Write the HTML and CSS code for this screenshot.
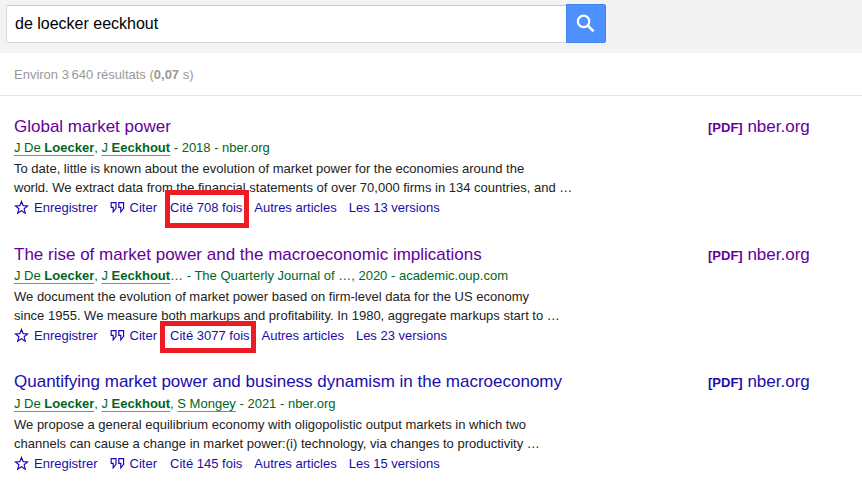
FILE: index.html
```html
<!DOCTYPE html>
<html lang="fr">
<head>
    <meta charset="UTF-8">
    <meta name="viewport" content="width=device-width, initial-scale=1.0">
    <title>de loecker eeckhout</title>
    <link rel="stylesheet" href="styles.css">
</head>
<body>
    <svg class="defs" width="0" height="0">
        <symbol id="star" viewBox="0 0 15 15">
            <path d="M7.5 1.4L9.1 5.6L13.6 5.9L10.1 8.8L11.3 13.2L7.5 10.8L3.7 13.2L4.9 8.8L1.4 5.9L5.9 5.6Z" fill="none" stroke="currentColor" stroke-width="1.2"/>
        </symbol>
        <symbol id="quote" viewBox="0 0 15 15">
            <path d="M1.2 2.6H6V8.4L3.2 11.9V7.4H1.2ZM8.8 2.6H13.6V8.4L10.8 11.9V7.4H8.8Z" fill="none" stroke="currentColor" stroke-width="1.2"/>
        </symbol>
    </svg>

    <header class="header">
        <form class="search">
            <input class="search-input" type="text" value="de loecker eeckhout">
            <button class="search-button" type="button" aria-label="Rechercher">
                <svg width="20" height="20" viewBox="0 0 20 20">
                    <circle cx="7.6" cy="7.4" r="5.7" fill="none" stroke="#fff" stroke-width="2.2"/>
                    <path d="M11.6 11.4L17.6 17.4" stroke="#fff" stroke-width="2.6"/>
                </svg>
            </button>
        </form>
    </header>

    <div class="stats">Environ 3<span class="thin"></span>640 résultats (<b>0,07</b> s)</div>

    <main class="results">
        <article class="result">
            <div class="main">
                <h3 class="title visited">Global market power</h3>
                <div class="authors"><a>J De <b>Loecker</b></a>, <a>J <b>Eeckhout</b></a> - 2018 - nber.org</div>
                <div class="snippet">To date, little is known about the evolution of market power for the economies around the<br>world. We extract data from the financial statements of over 70,000 firms in 134 countries, and …</div>
                <div class="links">
                    <a class="action"><svg width="15" height="15"><use href="#star"/></svg>Enregistrer</a>
                    <a class="action"><svg width="15" height="15"><use href="#quote"/></svg>Citer</a>
                    <a class="cited">Cité 708 fois<span class="frame frame-first"></span></a>
                    <a>Autres articles</a>
                    <a>Les 13 versions</a>
                </div>
            </div>
            <div class="pdf visited"><b>[PDF]</b> nber.org</div>
        </article>

        <article class="result">
            <div class="main">
                <h3 class="title visited">The rise of market power and the macroeconomic implications</h3>
                <div class="authors"><a>J De <b>Loecker</b></a>, <a>J <b>Eeckhout</b></a>… - The Quarterly Journal of …, 2020 - academic.oup.com</div>
                <div class="snippet">We document the evolution of market power based on firm-level data for the US economy<br>since 1955. We measure both markups and profitability. In 1980, aggregate markups start to …</div>
                <div class="links">
                    <a class="action"><svg width="15" height="15"><use href="#star"/></svg>Enregistrer</a>
                    <a class="action"><svg width="15" height="15"><use href="#quote"/></svg>Citer</a>
                    <a class="cited">Cité 3077 fois<span class="frame frame-second"></span></a>
                    <a>Autres articles</a>
                    <a>Les 23 versions</a>
                </div>
            </div>
            <div class="pdf visited"><b>[PDF]</b> nber.org</div>
        </article>

        <article class="result">
            <div class="main">
                <h3 class="title">Quantifying market power and business dynamism in the macroeconomy</h3>
                <div class="authors"><a>J De <b>Loecker</b></a>, <a>J <b>Eeckhout</b></a>, <a>S Mongey</a> - 2021 - nber.org</div>
                <div class="snippet">We propose a general equilibrium economy with oligopolistic output markets in which two<br>channels can cause a change in market power:(i) technology, via changes to productivity …</div>
                <div class="links">
                    <a class="action"><svg width="15" height="15"><use href="#star"/></svg>Enregistrer</a>
                    <a class="action"><svg width="15" height="15"><use href="#quote"/></svg>Citer</a>
                    <a class="cited">Cité 145 fois</a>
                    <a>Autres articles</a>
                    <a>Les 15 versions</a>
                </div>
            </div>
            <div class="pdf"><b>[PDF]</b> nber.org</div>
        </article>
    </main>
</body>
</html>
```
FILE: styles.css
```css
* {
    box-sizing: border-box;
}
body {
    margin: 0;
    height: 490px;
    overflow: hidden;
    background: #fff;
    color: #222;
    font-family: Arial, "Liberation Sans", sans-serif;
    font-size: 13px;
}
.defs {
    display: block;
}
.header {
    height: 53px;
    padding: 4px 6px;
    background: #f3f3f3;
}
.search {
    display: flex;
    width: 600px;
    height: 39px;
}
.search-input {
    flex: 1;
    height: 38px;
    margin-top: 1px;
    padding: 0 8px;
    border: 1px solid #d9d9d9;
    border-top-color: #c8c8c8;
    border-right: none;
    border-radius: 2px 0 0 2px;
    background: #fff;
    color: #000;
    font: 16px Arial, "Liberation Sans", sans-serif;
}
.search-button {
    display: flex;
    align-items: center;
    justify-content: center;
    width: 40px;
    padding: 0;
    border: 1px solid #4083f0;
    border-radius: 0 2px 2px 0;
    background: #4d90fe;
}
.stats {
    height: 43px;
    padding-left: 14px;
    border-bottom: 1px solid #e5e5e5;
    color: #999;
    line-height: 43px;
}
.thin {
    margin-left: 2.5px;
}
.results {
    padding: 19px 0 0 14px;
}
.result {
    display: flex;
    height: 128px;
}
.result:last-child {
    margin-top: -1px;
}
.result:last-child .authors {
    margin-top: 1px;
}
.main {
    width: 694px;
}
.title {
    margin: 0;
    color: #1a0dab;
    font-size: 17px;
    font-weight: normal;
    line-height: 23px;
}
.authors {
    color: #006621;
    line-height: 19px;
}
.authors a {
    text-decoration: underline;
    text-decoration-color: #5c9c70;
    text-underline-offset: 3px;
}
.snippet {
    margin-top: 2px;
    line-height: 19px;
}
.links {
    display: flex;
    gap: 12px;
    margin-top: 1px;
    color: #1a0dab;
    line-height: 20px;
}
.action {
    display: flex;
    align-items: center;
    gap: 5px;
}
.action svg {
    margin-top: -1px;
}
.cited {
    position: relative;
    margin-left: 1px;
}
/* red highlight over the citation count */
.frame {
    position: absolute;
    border: 5px solid #ed1c24;
}
.frame-first {
    top: -8px;
    left: -5px;
    width: 84px;
    height: 38px;
}
.frame-second {
    top: -5px;
    left: -10px;
    width: 96px;
    height: 32px;
}
.pdf {
    color: #1a0dab;
    font-size: 17px;
    line-height: 23px;
}
.pdf b {
    font-size: 13px;
}
.visited {
    color: #660099;
}
```
